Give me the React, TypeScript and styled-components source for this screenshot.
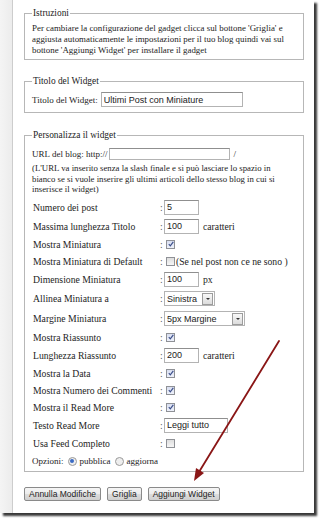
import React from "react";
import styled, { createGlobalStyle } from "styled-components";

const Global = createGlobalStyle`
  html, body { margin: 0; padding: 0; background: #fff; }
  body {
    width: 321px; height: 522px; overflow: hidden;
    font-family: "Liberation Serif", "Times New Roman", serif;
    color: #1d1d1d;
  }
`;

const Window = styled.div`
  position: relative;
  width: 314px;
  height: 513px;
  display: flex;
  background: #fff;
  box-shadow: 3px 3px 2px rgba(0, 0, 0, 0.78);
`;

const SideStrip = styled.div`
  flex: 0 0 12px;
  background: linear-gradient(90deg, #f4f4f4, #ececec);
  border-right: 1px solid #cdcdcd;
`;

const Content = styled.div`
  flex: 1;
  padding: 7px 10px 0 11px;
  display: flex;
  flex-direction: column;
`;

const Fieldset = styled.fieldset<{ $mt?: number; $pb?: number }>`
  margin: ${(p) => p.$mt ?? 0}px 0 0;
  padding: 0 6px ${(p) => p.$pb ?? 3}px 7px;
  border: 1px solid #b7b7b7;
  min-width: 0;
`;

const Legend = styled.legend`
  padding: 0 1px;
  font-size: 9.4px;
  line-height: 12px;
`;

const Para = styled.p<{ $mt: number; $lh: number; $fs: number }>`
  margin: ${(p) => p.$mt}px 0 0;
  font-size: ${(p) => p.$fs}px;
  line-height: ${(p) => p.$lh}px;
  white-space: nowrap;
`;

const InlineRow = styled.div<{ $mt: number; $h: number }>`
  display: flex;
  align-items: center;
  margin-top: ${(p) => p.$mt}px;
  height: ${(p) => p.$h}px;
  font-size: 9px;
  white-space: nowrap;
`;

const FormRow = styled.div<{ $h: number }>`
  display: flex;
  align-items: center;
  height: ${(p) => p.$h}px;
  padding-left: 1px;
  font-size: 9.7px;
  white-space: nowrap;
`;

const Rows = styled.div`
  margin-top: 3px;
  display: flex;
  flex-direction: column;
`;

const Label = styled.span`
  min-width: 125px;
`;

const Colon = styled.span`
  display: inline-block;
  width: 4px;
  padding-left: 2px;
  color: #555;
`;

const TextInput = styled.input<{ $w: number; $h?: number; $ml?: number }>`
  width: ${(p) => p.$w}px;
  height: ${(p) => p.$h ?? 15}px;
  margin: 0 0 0 ${(p) => p.$ml ?? 0}px;
  box-sizing: border-box;
  border: 1px solid #b3b3b3;
  border-top-color: #8f8f8f;
  padding: 0 2px;
  font: 9px "Liberation Sans", Arial, sans-serif;
  color: #222;
  background: #fff;
  outline: none;
`;

const Unit = styled.span<{ $ml?: number }>`
  margin-left: ${(p) => p.$ml ?? 4}px;
`;

const SelectBox = styled.div<{ $w: number }>`
  display: flex;
  align-items: center;
  width: ${(p) => p.$w}px;
  height: 15px;
  box-sizing: border-box;
  border: 1px solid #b3b3b3;
  padding-left: 2px;
  font: 9px "Liberation Sans", Arial, sans-serif;
  color: #222;
  background: #fff;
`;

const SelectButton = styled.span`
  margin-left: auto;
  margin-right: 1px;
  width: 9px;
  height: 10px;
  border: 1px solid #9c9c9c;
  background: linear-gradient(#f8f8f8, #dcdcdc);
  display: flex;
  align-items: center;
  justify-content: center;
  &::after {
    content: "";
    border-left: 2px solid transparent;
    border-right: 2px solid transparent;
    border-top: 2px solid #333;
  }
`;

const Box = styled.span<{ $checked?: boolean }>`
  display: inline-flex;
  align-items: center;
  justify-content: center;
  width: 7px;
  height: 7px;
  margin-left: 2px;
  border: 1px solid #8f9196;
  background: ${(p) =>
    p.$checked ? "linear-gradient(#d8def0, #eef1fa)" : "linear-gradient(#dedede, #f6f6f6)"};
`;

const RadioDot = styled.span<{ $checked?: boolean }>`
  display: inline-flex;
  align-items: center;
  justify-content: center;
  width: 7px;
  height: 7px;
  border-radius: 50%;
  border: 1px solid #9a9a9a;
  background: #eee;
  margin: 0 3px 0 4px;
  &::after {
    content: "";
    display: ${(p) => (p.$checked ? "block" : "none")};
    width: 4px;
    height: 4px;
    border-radius: 50%;
    background: #3a6bc4;
  }
`;

const Buttons = styled.div`
  margin-top: 15px;
  display: flex;
  gap: 6px;
`;

const Button = styled.button`
  height: 14px;
  margin: 0;
  padding: 0 4px;
  border: 1px solid #8a8a8a;
  border-radius: 2px;
  background: linear-gradient(#f5f5f5 0%, #ececec 48%, #dcdcdc 52%, #cfcfcf 100%);
  font: 8.5px "Liberation Sans", Arial, sans-serif;
  line-height: 12px;
  color: #222;
`;

const ArrowLayer = styled.svg`
  position: absolute;
  left: 0;
  top: 0;
  pointer-events: none;
`;

const Check = ({ checked }: { checked?: boolean }) => (
  <Box $checked={checked}>
    {checked && (
      <svg width="6" height="6" viewBox="0 0 6 6">
        <path d="M0.8 3.2 L2.3 4.8 L5.3 0.8" fill="none" stroke="#3d4f8a" strokeWidth="1.2" />
      </svg>
    )}
  </Box>
);

type RowSpec =
  | { label: string; kind: "input"; value: string; w: number; unit?: string }
  | { label: string; kind: "check"; checked: boolean; after?: string }
  | { label: string; kind: "select"; value: string; w: number };

const rows: RowSpec[] = [
  { label: "Numero dei post", kind: "input", value: "5", w: 35 },
  { label: "Massima lunghezza Titolo", kind: "input", value: "100", w: 35, unit: "caratteri" },
  { label: "Mostra Miniatura", kind: "check", checked: true },
  { label: "Mostra Miniatura di Default", kind: "check", checked: false, after: "(Se nel post non ce ne sono )" },
  { label: "Dimensione Miniatura", kind: "input", value: "100", w: 35, unit: "px" },
  { label: "Allinea Miniatura a", kind: "select", value: "Sinistra", w: 51 },
  { label: "Margine Miniatura", kind: "select", value: "5px Margine", w: 81 },
  { label: "Mostra Riassunto", kind: "check", checked: true },
  { label: "Lunghezza Riassunto", kind: "input", value: "200", w: 35, unit: "caratteri" },
  { label: "Mostra la Data", kind: "check", checked: true },
  { label: "Mostra Numero dei Commenti", kind: "check", checked: true },
  { label: "Mostra il Read More", kind: "check", checked: true },
  { label: "Testo Read More", kind: "input", value: "Leggi tutto", w: 64 },
  { label: "Usa Feed Completo", kind: "check", checked: false },
];

const rowHeight = (r: RowSpec) => (r.kind === "check" ? 17 : r.kind === "select" ? 20 : 19);

export default function App() {
  return (
    <>
      <Global />
      <Window>
        <SideStrip />
        <Content>
          <Fieldset $pb={3}>
            <Legend>Istruzioni</Legend>
            <Para $mt={4} $lh={11} $fs={8.9}>
              Per cambiare la configurazione del gadget clicca sul bottone 'Griglia' e
              <br />
              aggiusta automaticamente le impostazioni per il tuo blog quindi vai sul
              <br />
              bottone 'Aggiungi Widget' per installare il gadget
            </Para>
          </Fieldset>

          <Fieldset $mt={15} $pb={5}>
            <Legend>Titolo del Widget</Legend>
            <InlineRow $mt={5} $h={15}>
              Titolo del Widget:
              <TextInput $w={142} $ml={3} defaultValue="Ultimi Post con Miniature" />
            </InlineRow>
          </Fieldset>

          <Fieldset $mt={16} $pb={3}>
            <Legend>Personalizza il widget</Legend>
            <InlineRow $mt={6} $h={13}>
              URL del blog: http://
              <TextInput $w={121} $h={12} $ml={2} defaultValue="" />
              <Unit $ml={3}>/</Unit>
            </InlineRow>
            <Para $mt={3} $lh={10.5} $fs={8.75}>
              (L'URL va inserito senza la slash finale e si può lasciare lo spazio in
              <br />
              bianco se si vuole inserire gli ultimi articoli dello stesso blog in cui si
              <br />
              inserisce il widget)
            </Para>
            <Rows>
              {rows.map((r) => (
                <FormRow key={r.label} $h={rowHeight(r)}>
                  <Label>{r.label}</Label>
                  <Colon>:</Colon>
                  {r.kind === "input" && (
                    <>
                      <TextInput $w={r.w} defaultValue={r.value} />
                      {r.unit && <Unit>{r.unit}</Unit>}
                    </>
                  )}
                  {r.kind === "select" && (
                    <SelectBox $w={r.w}>
                      {r.value}
                      <SelectButton />
                    </SelectBox>
                  )}
                  {r.kind === "check" && (
                    <>
                      <Check checked={r.checked} />
                      {r.after && <Unit $ml={1}>{r.after}</Unit>}
                    </>
                  )}
                </FormRow>
              ))}
            </Rows>
            <InlineRow $mt={3} $h={13}>
              Opzioni:
              <RadioDot $checked />
              pubblica
              <RadioDot />
              aggiorna
            </InlineRow>
          </Fieldset>

          <Buttons>
            <Button>Annulla Modifiche</Button>
            <Button>Griglia</Button>
            <Button>Aggiungi Widget</Button>
          </Buttons>
        </Content>

        <ArrowLayer width="314" height="513" viewBox="0 0 314 513">
          <line x1="279" y1="341" x2="199" y2="472" stroke="#8a1616" strokeWidth="1.8" strokeLinecap="round" />
          <polygon points="194,481 204,473 196,468" fill="#8a1616" />
        </ArrowLayer>
      </Window>
    </>
  );
}
